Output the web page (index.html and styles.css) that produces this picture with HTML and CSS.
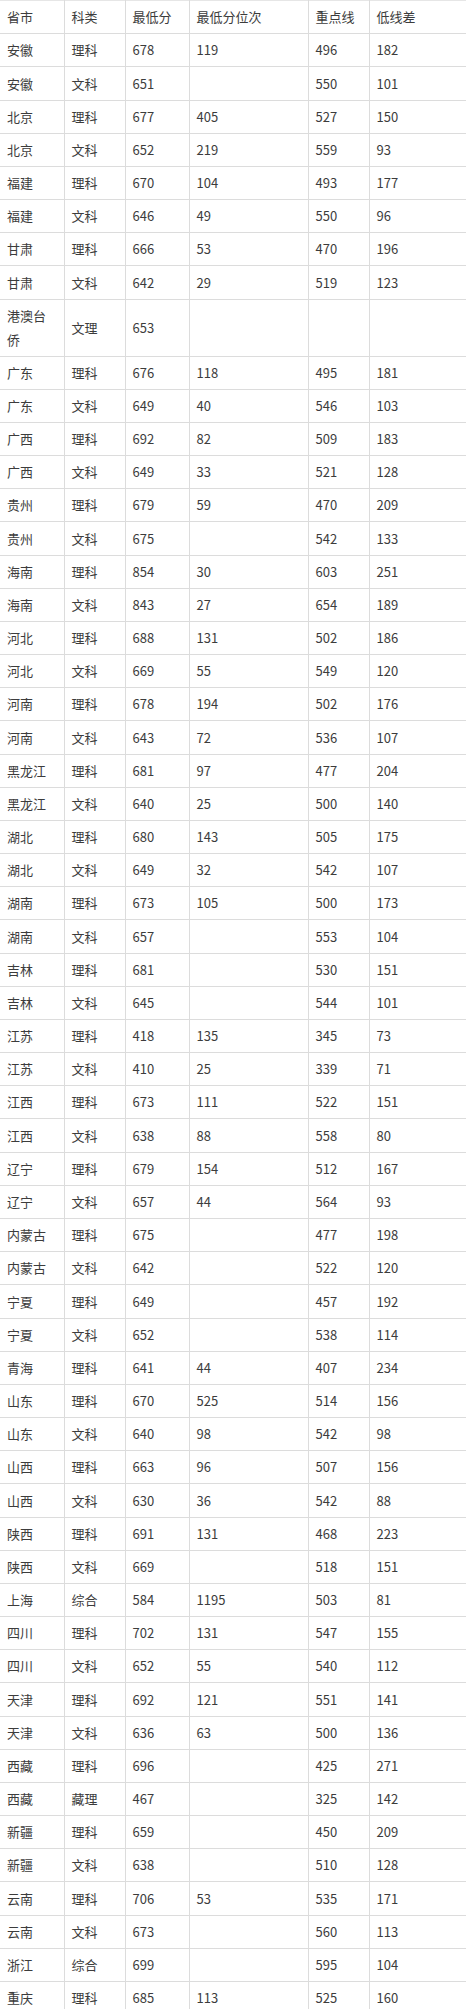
FILE: index.html
```html
<!DOCTYPE html>
<html lang="zh">
<head>
<meta charset="utf-8">
<link rel="stylesheet" href="styles.css">
</head>
<body>
<table class="score-table">
<colgroup>
<col class="c1"><col class="c2"><col class="c3"><col class="c4"><col class="c5"><col class="c6">
</colgroup>
<tbody>
<tr><td>省市</td><td>科类</td><td>最低分</td><td>最低分位次</td><td>重点线</td><td>低线差</td></tr>
<tr><td>安徽</td><td>理科</td><td>678</td><td>119</td><td>496</td><td>182</td></tr>
<tr><td>安徽</td><td>文科</td><td>651</td><td></td><td>550</td><td>101</td></tr>
<tr><td>北京</td><td>理科</td><td>677</td><td>405</td><td>527</td><td>150</td></tr>
<tr><td>北京</td><td>文科</td><td>652</td><td>219</td><td>559</td><td>93</td></tr>
<tr><td>福建</td><td>理科</td><td>670</td><td>104</td><td>493</td><td>177</td></tr>
<tr><td>福建</td><td>文科</td><td>646</td><td>49</td><td>550</td><td>96</td></tr>
<tr><td>甘肃</td><td>理科</td><td>666</td><td>53</td><td>470</td><td>196</td></tr>
<tr><td>甘肃</td><td>文科</td><td>642</td><td>29</td><td>519</td><td>123</td></tr>
<tr><td>港澳台侨</td><td>文理</td><td>653</td><td></td><td></td><td></td></tr>
<tr><td>广东</td><td>理科</td><td>676</td><td>118</td><td>495</td><td>181</td></tr>
<tr><td>广东</td><td>文科</td><td>649</td><td>40</td><td>546</td><td>103</td></tr>
<tr><td>广西</td><td>理科</td><td>692</td><td>82</td><td>509</td><td>183</td></tr>
<tr><td>广西</td><td>文科</td><td>649</td><td>33</td><td>521</td><td>128</td></tr>
<tr><td>贵州</td><td>理科</td><td>679</td><td>59</td><td>470</td><td>209</td></tr>
<tr><td>贵州</td><td>文科</td><td>675</td><td></td><td>542</td><td>133</td></tr>
<tr><td>海南</td><td>理科</td><td>854</td><td>30</td><td>603</td><td>251</td></tr>
<tr><td>海南</td><td>文科</td><td>843</td><td>27</td><td>654</td><td>189</td></tr>
<tr><td>河北</td><td>理科</td><td>688</td><td>131</td><td>502</td><td>186</td></tr>
<tr><td>河北</td><td>文科</td><td>669</td><td>55</td><td>549</td><td>120</td></tr>
<tr><td>河南</td><td>理科</td><td>678</td><td>194</td><td>502</td><td>176</td></tr>
<tr><td>河南</td><td>文科</td><td>643</td><td>72</td><td>536</td><td>107</td></tr>
<tr><td>黑龙江</td><td>理科</td><td>681</td><td>97</td><td>477</td><td>204</td></tr>
<tr><td>黑龙江</td><td>文科</td><td>640</td><td>25</td><td>500</td><td>140</td></tr>
<tr><td>湖北</td><td>理科</td><td>680</td><td>143</td><td>505</td><td>175</td></tr>
<tr><td>湖北</td><td>文科</td><td>649</td><td>32</td><td>542</td><td>107</td></tr>
<tr><td>湖南</td><td>理科</td><td>673</td><td>105</td><td>500</td><td>173</td></tr>
<tr><td>湖南</td><td>文科</td><td>657</td><td></td><td>553</td><td>104</td></tr>
<tr><td>吉林</td><td>理科</td><td>681</td><td></td><td>530</td><td>151</td></tr>
<tr><td>吉林</td><td>文科</td><td>645</td><td></td><td>544</td><td>101</td></tr>
<tr><td>江苏</td><td>理科</td><td>418</td><td>135</td><td>345</td><td>73</td></tr>
<tr><td>江苏</td><td>文科</td><td>410</td><td>25</td><td>339</td><td>71</td></tr>
<tr><td>江西</td><td>理科</td><td>673</td><td>111</td><td>522</td><td>151</td></tr>
<tr><td>江西</td><td>文科</td><td>638</td><td>88</td><td>558</td><td>80</td></tr>
<tr><td>辽宁</td><td>理科</td><td>679</td><td>154</td><td>512</td><td>167</td></tr>
<tr><td>辽宁</td><td>文科</td><td>657</td><td>44</td><td>564</td><td>93</td></tr>
<tr><td>内蒙古</td><td>理科</td><td>675</td><td></td><td>477</td><td>198</td></tr>
<tr><td>内蒙古</td><td>文科</td><td>642</td><td></td><td>522</td><td>120</td></tr>
<tr><td>宁夏</td><td>理科</td><td>649</td><td></td><td>457</td><td>192</td></tr>
<tr><td>宁夏</td><td>文科</td><td>652</td><td></td><td>538</td><td>114</td></tr>
<tr><td>青海</td><td>理科</td><td>641</td><td>44</td><td>407</td><td>234</td></tr>
<tr><td>山东</td><td>理科</td><td>670</td><td>525</td><td>514</td><td>156</td></tr>
<tr><td>山东</td><td>文科</td><td>640</td><td>98</td><td>542</td><td>98</td></tr>
<tr><td>山西</td><td>理科</td><td>663</td><td>96</td><td>507</td><td>156</td></tr>
<tr><td>山西</td><td>文科</td><td>630</td><td>36</td><td>542</td><td>88</td></tr>
<tr><td>陕西</td><td>理科</td><td>691</td><td>131</td><td>468</td><td>223</td></tr>
<tr><td>陕西</td><td>文科</td><td>669</td><td></td><td>518</td><td>151</td></tr>
<tr><td>上海</td><td>综合</td><td>584</td><td>1195</td><td>503</td><td>81</td></tr>
<tr><td>四川</td><td>理科</td><td>702</td><td>131</td><td>547</td><td>155</td></tr>
<tr><td>四川</td><td>文科</td><td>652</td><td>55</td><td>540</td><td>112</td></tr>
<tr><td>天津</td><td>理科</td><td>692</td><td>121</td><td>551</td><td>141</td></tr>
<tr><td>天津</td><td>文科</td><td>636</td><td>63</td><td>500</td><td>136</td></tr>
<tr><td>西藏</td><td>理科</td><td>696</td><td></td><td>425</td><td>271</td></tr>
<tr><td>西藏</td><td>藏理</td><td>467</td><td></td><td>325</td><td>142</td></tr>
<tr><td>新疆</td><td>理科</td><td>659</td><td></td><td>450</td><td>209</td></tr>
<tr><td>新疆</td><td>文科</td><td>638</td><td></td><td>510</td><td>128</td></tr>
<tr><td>云南</td><td>理科</td><td>706</td><td>53</td><td>535</td><td>171</td></tr>
<tr><td>云南</td><td>文科</td><td>673</td><td></td><td>560</td><td>113</td></tr>
<tr><td>浙江</td><td>综合</td><td>699</td><td></td><td>595</td><td>104</td></tr>
<tr><td>重庆</td><td>理科</td><td>685</td><td>113</td><td>525</td><td>160</td></tr>
</tbody>
</table>
</body>
</html>
```

FILE: styles.css
```css
html, body {
  margin: 0;
  padding: 0;
  background: #ffffff;
}

.score-table {
  width: 466px;
  table-layout: fixed;
  border-collapse: collapse;
  font-family: "Noto Sans CJK SC", "Noto Sans", sans-serif;
  font-size: 13px;
  color: #3c3c3c;
}

.score-table .c1 { width: 64px; }
.score-table .c2 { width: 61px; }
.score-table .c3 { width: 64px; }
.score-table .c4 { width: 119px; }
.score-table .c5 { width: 61px; }
.score-table .c6 { width: 97px; }

.score-table td {
  border: 1px solid #dcdcdc;
  padding: 4.2px 7px;
  line-height: 23.8px;
  text-align: left;
  vertical-align: middle;
  word-break: break-all;
}

.score-table tr:first-child td {
  border-top: 1px solid #e6e6e6;
}

.score-table td:first-child {
  border-left: none;
}

.score-table td:last-child {
  border-right: none;
}
```
